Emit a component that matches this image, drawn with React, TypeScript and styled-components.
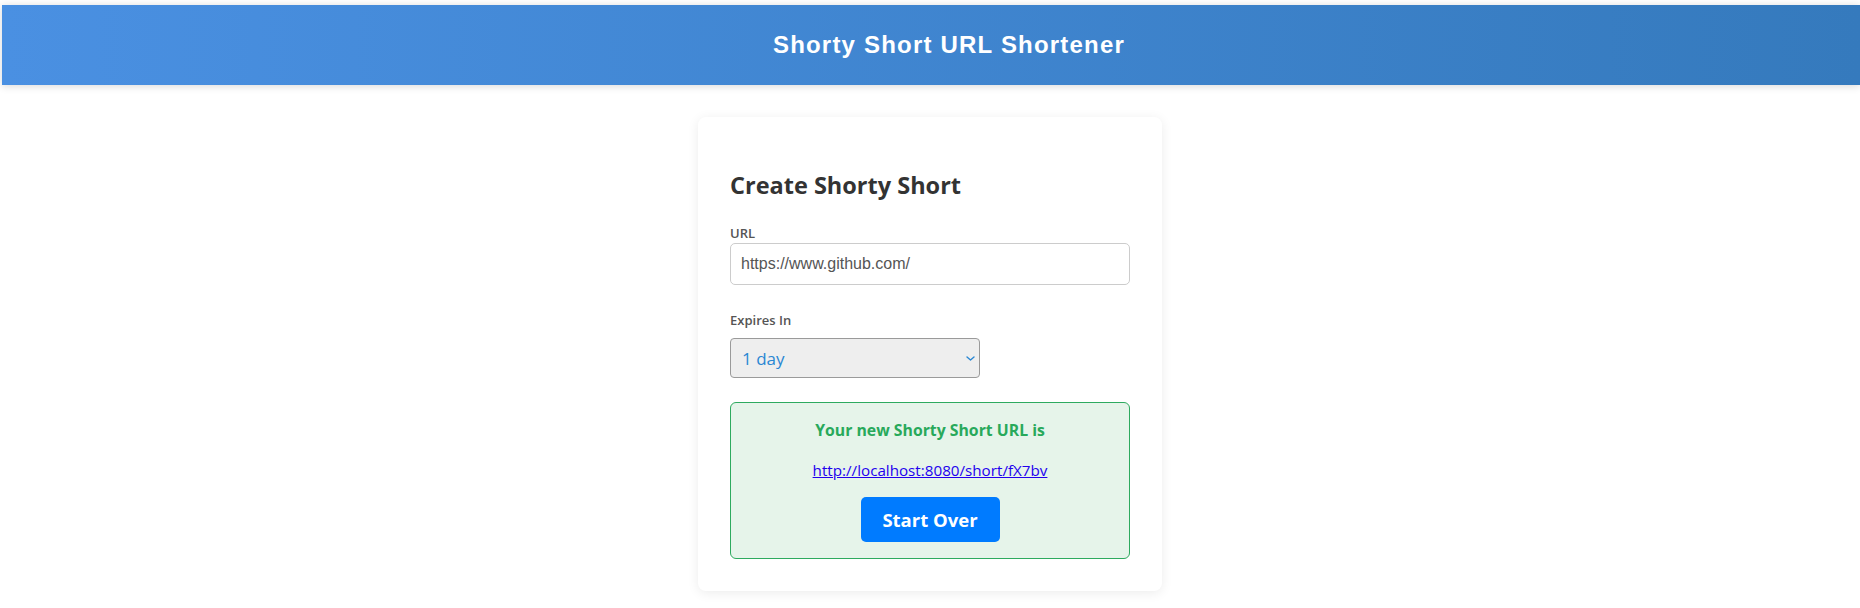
import React from "react";
import styled, { createGlobalStyle } from "styled-components";

const Global = createGlobalStyle`
  html, body { margin: 0; padding: 0; background: #ffffff; }
  body { font-family: "Open Sans", "Noto Sans", sans-serif; overflow: hidden; }
  * { box-sizing: border-box; }
`;

const Page = styled.div`
  display: flex;
  flex-direction: column;
  align-items: stretch;
  padding-top: 5px;
  min-height: 608px;
`;

const Header = styled.header`
  height: 80px;
  margin-left: 2px;
  display: flex;
  align-items: center;
  justify-content: center;
  padding-left: 36px;
  background: linear-gradient(90deg, #4a90e2 0%, #357abd 100%);
  box-shadow: 0 1px 8px rgba(0, 0, 0, 0.16);
`;

const Title = styled.h1`
  margin: 0;
  color: #ffffff;
  font-family: "Liberation Sans", Arial, sans-serif;
  font-weight: 700;
  font-size: 24px;
  letter-spacing: 0.05em;
`;

const Main = styled.main`
  display: flex;
  justify-content: center;
  padding-top: 32px;
`;

const Card = styled.section`
  width: 464px;
  background: #ffffff;
  border-radius: 8px;
  box-shadow: 0 2px 12px rgba(0, 0, 0, 0.08);
  padding: 52px 32px 32px;
  display: flex;
  flex-direction: column;
`;

const Heading = styled.h2`
  margin: 0 0 23px;
  font-size: 23.5px;
  line-height: 32px;
  font-weight: 700;
  color: #333333;
`;

const Label = styled.label<{ $gap: number }>`
  display: block;
  font-size: 13px;
  line-height: 18px;
  font-weight: 600;
  color: #555555;
  margin-bottom: ${(p) => p.$gap}px;
`;

const Field = styled.div<{ $gap: number }>`
  display: flex;
  flex-direction: column;
  margin-bottom: ${(p) => p.$gap}px;
`;

const TextInput = styled.input`
  width: 100%;
  height: 42px;
  padding: 0 10px;
  border: 1px solid #cccccc;
  border-radius: 5px;
  font-family: "Liberation Sans", Arial, sans-serif;
  font-size: 16px;
  color: #555555;
  background: #ffffff;
  outline: none;
`;

const SelectWrap = styled.div`
  position: relative;
  width: 250px;
`;

const Select = styled.select`
  appearance: none;
  -webkit-appearance: none;
  width: 250px;
  height: 40px;
  padding: 0 24px 0 11px;
  border: 1px solid #9a9a9a;
  border-radius: 4px;
  background: #eeeeee;
  color: #2a87d3;
  font-family: "Open Sans", "Noto Sans", sans-serif;
  font-size: 17px;
  outline: none;
`;

const Chevron = styled.svg`
  position: absolute;
  right: 5px;
  top: 18px;
  width: 9px;
  height: 5px;
  pointer-events: none;
`;

const Result = styled.div`
  border: 1px solid #2eaa5f;
  border-radius: 6px;
  background: #e6f4ea;
  padding: 16px 20px 16px;
  display: flex;
  flex-direction: column;
  align-items: center;
`;

const ResultTitle = styled.p`
  margin: 0 0 18px;
  font-size: 15.8px;
  line-height: 22px;
  font-weight: 700;
  color: #28a95b;
`;

const ShortLink = styled.a`
  font-size: 15.2px;
  line-height: 22px;
  color: #2200ee;
  text-decoration: underline;
  margin-bottom: 16px;
`;

const Button = styled.button`
  width: 139px;
  height: 45px;
  border: none;
  border-radius: 5px;
  background: #007bff;
  color: #ffffff;
  font-family: "Open Sans", "Noto Sans", sans-serif;
  font-size: 18.5px;
  font-weight: 700;
  cursor: pointer;
`;

export default function App() {
  return (
    <>
      <Global />
      <Page>
        <Header>
          <Title>Shorty Short URL Shortener</Title>
        </Header>
        <Main>
          <Card>
            <Heading>Create Shorty Short</Heading>
            <Field $gap={26}>
              <Label htmlFor="url" $gap={1}>URL</Label>
              <TextInput id="url" defaultValue="https://www.github.com/" />
            </Field>
            <Field $gap={24}>
              <Label htmlFor="exp" $gap={9}>Expires In</Label>
              <SelectWrap>
                <Select id="exp" defaultValue="1d">
                  <option value="1d">1 day</option>
                  <option value="1w">1 week</option>
                  <option value="1m">1 month</option>
                </Select>
                <Chevron viewBox="0 0 9 5">
                  <path d="M1 1 L4.5 4 L8 1" fill="none" stroke="#2a87d3" strokeWidth="1.4" strokeLinecap="round" strokeLinejoin="round" />
                </Chevron>
              </SelectWrap>
            </Field>
            <Result>
              <ResultTitle>Your new Shorty Short URL is</ResultTitle>
              <ShortLink href="http://localhost:8080/short/fX7bv">http://localhost:8080/short/fX7bv</ShortLink>
              <Button type="button">Start Over</Button>
            </Result>
          </Card>
        </Main>
      </Page>
    </>
  );
}
